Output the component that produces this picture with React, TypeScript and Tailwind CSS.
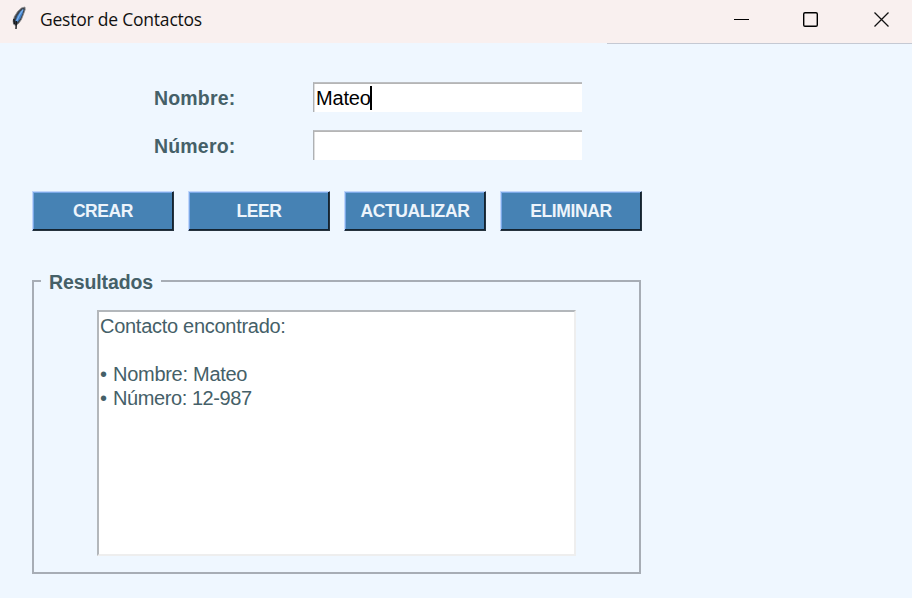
import { useState } from "react";

function FeatherIcon() {
  return (
    <svg width="16" height="26" viewBox="0 0 16 26" className="shrink-0">
      <path d="M14 2 L10.4 3 L6.6 6.5 L3.4 11.5 L2 16 L2.6 19.3 L4.6 20.6 L7.6 18.4 L10.4 14.6 L12.6 9 L14.2 4.6 Z" fill="#3d434b" stroke="#85878a" strokeWidth="0.8" />
      <path d="M12.6 4 L9.2 6.6 L6.2 11 L4.4 16 L6.6 17 L9.4 13.4 L11.6 8.4 Z" fill="#3f80cc" />
      <path d="M12 4.6 L8.6 9.8 L5.6 16" stroke="#7fb2ea" strokeWidth="1.2" fill="none" />
      <path d="M2.8 14 L3.4 19 M5.4 16 L5 24" stroke="#15171b" strokeWidth="1.4" fill="none" />
    </svg>
  );
}

function TitleBar() {
  return (
    <header className="flex h-[43px] items-start bg-[#f9f0ef]">
      <div className="flex h-[39px] flex-1 items-center pl-[11px]">
        <div className="-mt-1 h-[26px]"><FeatherIcon /></div>
        <h1 className="-mt-px ml-[13px] font-['Open_Sans','Noto_Sans',sans-serif] text-[17.5px] tracking-[-0.22px] text-[#111]">Gestor de Contactos</h1>
      </div>
      <div className="flex h-[39px] items-center pr-[22px]">
        <button aria-label="Minimizar" className="mr-[52px]">
          <svg width="17" height="17" viewBox="0 0 17 17"><path d="M1 8.5H16" stroke="#000" /></svg>
        </button>
        <button aria-label="Maximizar" className="mr-[54px]">
          <svg width="17" height="17" viewBox="0 0 17 17"><rect x="1.7" y="1.7" width="13.6" height="13.6" rx="1.3" fill="none" stroke="#000" strokeWidth="1.4" /></svg>
        </button>
        <button aria-label="Cerrar">
          <svg width="17" height="17" viewBox="0 0 17 17"><path d="M1.5 1.5L15.5 15.5M15.5 1.5L1.5 15.5" stroke="#111" strokeWidth="1.3" /></svg>
        </button>
      </div>
    </header>
  );
}

function Field({ label, value, focused }: { label: string; value: string; focused?: boolean }) {
  return (
    <div className="flex h-[30px] items-center">
      <span className="w-[159px] pt-[3px] text-[19.5px] font-bold tracking-[0.18px] text-[#456068]">{label}</span>
      <div className="flex h-[30px] w-[269px] items-center border-t border-l border-t-[#bcbec1] border-l-[#aeb1b4] bg-white pl-0.5 text-[20px] tracking-[-0.2px] text-black shadow-[inset_0_1px_0_#b5b5b5,inset_1px_0_0_#dedede]">
        {value}
        {focused && <span className="-ml-px h-6 w-[2px] bg-black" />}
      </div>
    </div>
  );
}

const actions = ["CREAR", "LEER", "ACTUALIZAR", "ELIMINAR"];

export default function App() {
  const [name] = useState("Mateo");
  return (
    <div className="h-[598px] w-[912px] overflow-hidden bg-[#eff7ff] font-['Liberation_Sans',Arial,sans-serif]">
      <TitleBar />
      <div className="ml-[607px] h-px bg-[#c5c9d3]" />
      <main className="pl-8">
        <section className="flex flex-col gap-[18px] pt-[38px] pl-[122px]">
          <Field label="Nombre:" value={name} focused />
          <Field label="Número:" value="" />
        </section>
        <div className="mt-[31px] flex gap-[14px]">
          {actions.map((label) => (
            <button key={label} className="flex h-10 w-[142px] items-center justify-center border border-t-[#c0d6fb] border-r-[#26333e] border-b-[#26333e] border-l-[#c0d6fb] bg-[#4682b4] text-[17.5px] font-bold tracking-[-0.4px] text-[#edf4fb] shadow-[inset_-1px_-1px_0_#142330,inset_1px_1px_0_#7ba8e6]">
              {label}
            </button>
          ))}
        </div>
        <fieldset className="mt-[37px] h-[306px] w-[609px] border-2 border-[#a7adb5] pl-[63px]">
          <legend className="-ml-[56px] h-[26px] px-2 text-[19.5px] leading-[28px] font-bold tracking-[-0.1px] text-[#456068]">Resultados</legend>
          <div className="mt-[16px] h-[246px] w-[479px] border-2 border-t-[#b3b7bb] border-r-[#eeeeee] border-b-[#eeeeee] border-l-[#b3b7bb] bg-white pt-[2px] pl-px text-[20px] leading-6 tracking-[-0.28px] text-[#456068]">
            <p>Contacto encontrado:</p>
            <p className="mt-6"><span className="mr-px">•</span> Nombre: Mateo</p>
            <p className="tracking-[-0.42px]"><span className="mr-[1.3px]">•</span> Número: 12-987</p>
          </div>
        </fieldset>
      </main>
    </div>
  );
}
